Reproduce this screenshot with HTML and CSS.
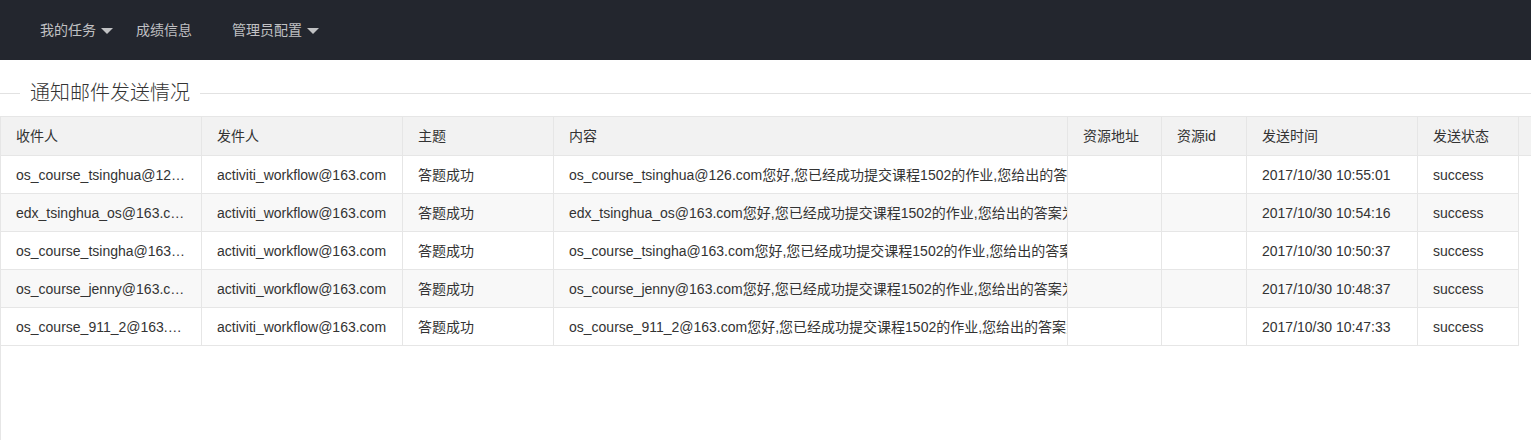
FILE: index.html
```html
<!DOCTYPE html>
<html lang="zh-CN">
<head>
<meta charset="utf-8">
<title>通知邮件发送情况</title>
<link rel="stylesheet" href="styles.css">
</head>
<body>
<header class="topbar">
  <ul class="nav">
    <li class="nav-item has-more">我的任务<span class="caret"></span></li>
    <li class="nav-item">成绩信息</li>
    <li class="nav-item has-more">管理员配置<span class="caret"></span></li>
  </ul>
</header>

<div class="section-title">
  <span class="rule rule-short"></span>
  <span class="title-text">通知邮件发送情况</span>
  <span class="rule rule-long"></span>
</div>

<div class="table-view">
  <div class="thead">
    <div class="th">收件人</div>
    <div class="th">发件人</div>
    <div class="th">主题</div>
    <div class="th">内容</div>
    <div class="th">资源地址</div>
    <div class="th">资源id</div>
    <div class="th">发送时间</div>
    <div class="th">发送状态</div>
    <div class="th th-fill"></div>
  </div>
  <div class="tbody">
    <div class="tr">
      <div class="td">os_course_tsinghua@126.com</div>
      <div class="td">activiti_workflow@163.com</div>
      <div class="td">答题成功</div>
      <div class="td td-clip">os_course_tsinghua@126.com您好,您已经成功提交课程1502的作业,您给出的答案为ABCD</div>
      <div class="td"></div>
      <div class="td"></div>
      <div class="td">2017/10/30 10:55:01</div>
      <div class="td">success</div>
    </div>
    <div class="tr">
      <div class="td">edx_tsinghua_os@163.com</div>
      <div class="td">activiti_workflow@163.com</div>
      <div class="td">答题成功</div>
      <div class="td td-clip">edx_tsinghua_os@163.com您好,您已经成功提交课程1502的作业,您给出的答案为ABCD</div>
      <div class="td"></div>
      <div class="td"></div>
      <div class="td">2017/10/30 10:54:16</div>
      <div class="td">success</div>
    </div>
    <div class="tr">
      <div class="td">os_course_tsingha@163.com</div>
      <div class="td">activiti_workflow@163.com</div>
      <div class="td">答题成功</div>
      <div class="td td-clip">os_course_tsingha@163.com您好,您已经成功提交课程1502的作业,您给出的答案为ABCD</div>
      <div class="td"></div>
      <div class="td"></div>
      <div class="td">2017/10/30 10:50:37</div>
      <div class="td">success</div>
    </div>
    <div class="tr">
      <div class="td">os_course_jenny@163.com</div>
      <div class="td">activiti_workflow@163.com</div>
      <div class="td">答题成功</div>
      <div class="td td-clip">os_course_jenny@163.com您好,您已经成功提交课程1502的作业,您给出的答案为ABCD</div>
      <div class="td"></div>
      <div class="td"></div>
      <div class="td">2017/10/30 10:48:37</div>
      <div class="td">success</div>
    </div>
    <div class="tr">
      <div class="td">os_course_911_2@163.com</div>
      <div class="td">activiti_workflow@163.com</div>
      <div class="td">答题成功</div>
      <div class="td td-clip">os_course_911_2@163.com您好,您已经成功提交课程1502的作业,您给出的答案为ABCD</div>
      <div class="td"></div>
      <div class="td"></div>
      <div class="td">2017/10/30 10:47:33</div>
      <div class="td">success</div>
    </div>
  </div>
</div>
</body>
</html>
```

FILE: styles.css
```css
* {
  box-sizing: border-box;
}

html, body {
  margin: 0;
  padding: 0;
  background: #fff;
  overflow-x: hidden;
}

body {
  font-family: "Liberation Sans", Arial, "Noto Sans CJK SC", sans-serif;
  font-size: 14px;
  color: #333;
}

/* top navigation */
.topbar {
  height: 60px;
  background: #23262e;
}

.nav {
  list-style: none;
  margin: 0;
  padding: 0 0 0 20px;
  display: flex;
  height: 60px;
}

.nav-item {
  display: flex;
  align-items: center;
  height: 60px;
  padding: 0 20px;
  color: rgba(255, 255, 255, 0.72);
  font-size: 14px;
  line-height: 60px;
}

.nav-item.has-more {
  padding-right: 3px;
}

.caret {
  display: block;
  width: 0;
  height: 0;
  margin-left: 5px;
  margin-top: 1px;
  border-left: 6px solid transparent;
  border-right: 6px solid transparent;
  border-top: 6px solid rgba(255, 255, 255, 0.72);
}

/* section title (fieldset style) */
.section-title {
  display: flex;
  align-items: center;
  height: 46px;
  margin-top: 10px;
}

.rule {
  display: block;
  height: 1px;
  background: #e2e2e2;
}

.rule-short {
  width: 20px;
}

.rule-long {
  flex: 1;
}

.title-text {
  padding: 0 10px;
  font-size: 20px;
  font-weight: 300;
  line-height: 28px;
  color: #333;
}

/* table */
.table-view {
  border-left: 1px solid #e6e6e6;
  border-top: 1px solid #e6e6e6;
  min-height: 340px;
}

.thead {
  display: grid;
  grid-template-columns: 201px 201px 151px 514px 94px 85px 171px 101px 1fr;
  background: #f2f2f2;
  border-bottom: 1px solid #e6e6e6;
}

.th {
  height: 38px;
  line-height: 38px;
  padding: 0 15px;
  border-right: 1px solid #e6e6e6;
  white-space: nowrap;
  overflow: hidden;
  color: #333;
}

.th-fill {
  border-right: none;
}

.tbody {
  width: 1517px;
}

.tr {
  display: grid;
  grid-template-columns: 201px 201px 151px 514px 94px 85px 171px 101px;
}

.tr:nth-child(even) {
  background: #f8f8f8;
}

.td {
  height: 38px;
  line-height: 38px;
  padding: 0 15px;
  border-right: 1px solid #e6e6e6;
  border-bottom: 1px solid #e6e6e6;
  white-space: nowrap;
  overflow: hidden;
  text-overflow: ellipsis;
  color: #333;
}

.td-clip {
  text-overflow: clip;
}
```
